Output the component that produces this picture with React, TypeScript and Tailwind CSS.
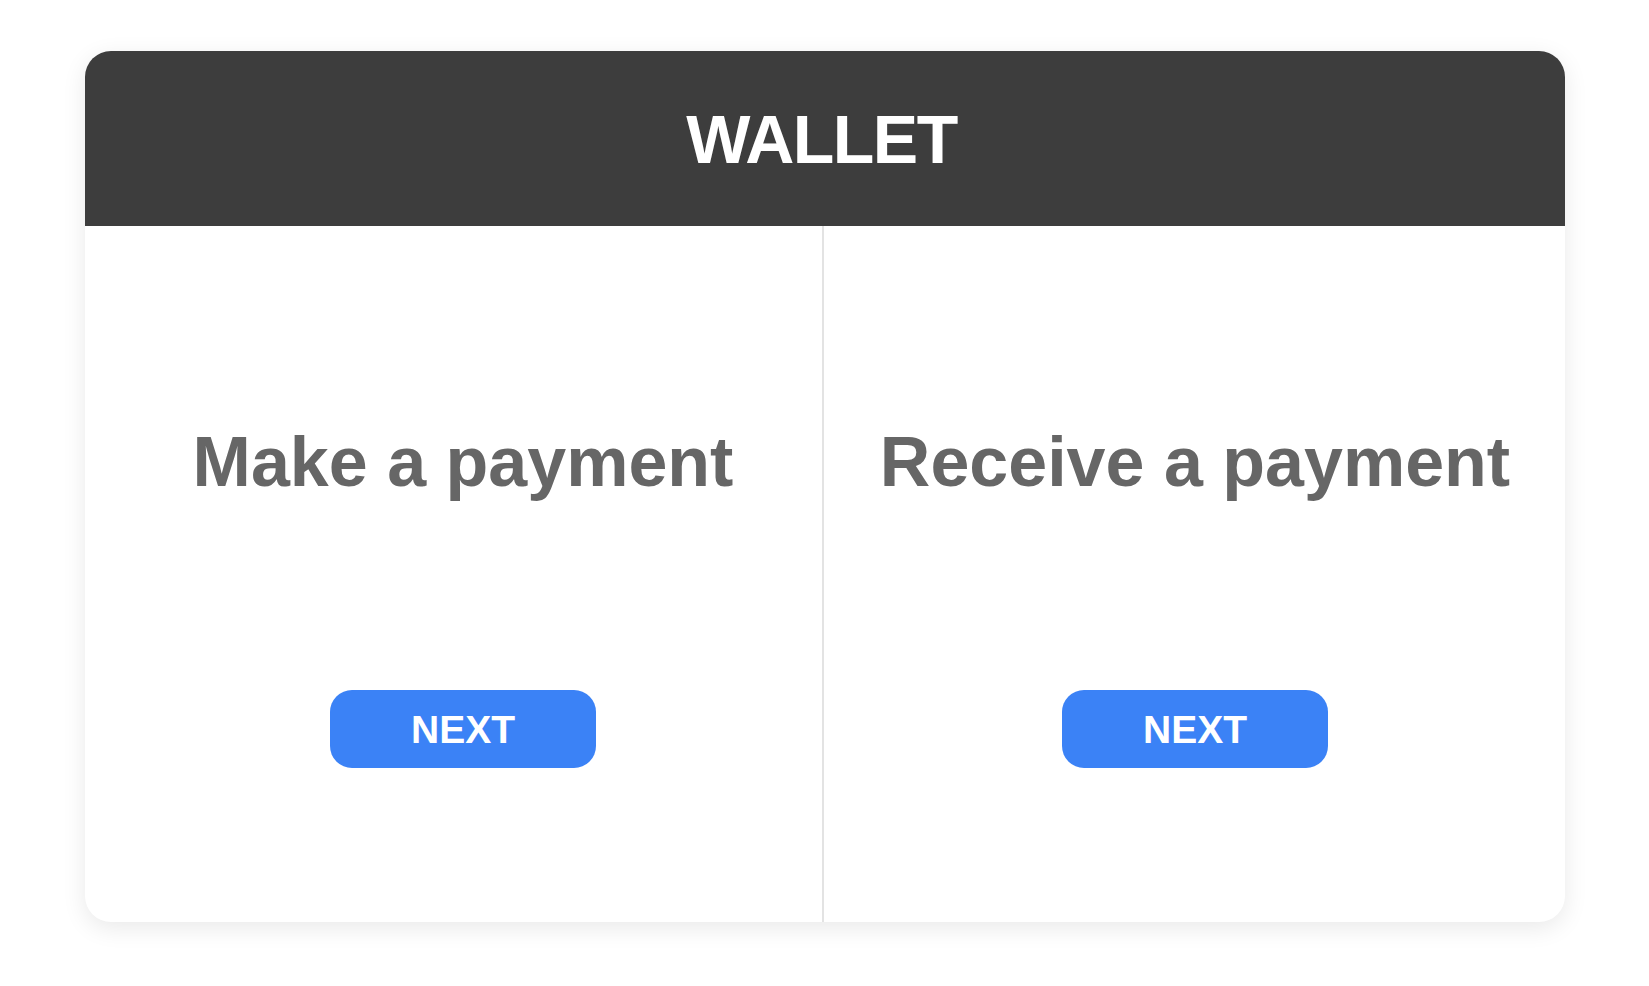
import React from "react";

const font = { fontFamily: '"Liberation Sans", Arial, Helvetica, sans-serif' };

function Panel({ title, pl }: { title: string; pl: string }) {
  return (
    <div className={`flex flex-1 flex-col items-center pt-[201px] ${pl}`}>
      <h2 className="text-[70px] font-bold leading-none text-[#666666] whitespace-nowrap">{title}</h2>
      <button className="mt-[193px] flex h-[78px] w-[266px] items-center justify-center rounded-[22px] bg-[#3b82f6] text-[39px] font-bold leading-none text-white">
        NEXT
      </button>
    </div>
  );
}

export default function App() {
  return (
    <div className="min-h-screen bg-white pt-[51px] pl-[85px]" style={font}>
      <div className="flex h-[871px] w-[1480px] flex-col overflow-hidden rounded-[26px] bg-white shadow-[0_6px_24px_rgba(0,0,0,0.09)]">
        <div className="flex h-[175px] shrink-0 items-center justify-center bg-[#3d3d3d] pr-[7px]">
          <h1 className="text-[68px] font-bold leading-none tracking-[-1.5px] text-white">WALLET</h1>
        </div>
        <div className="flex flex-1">
          <div className="flex w-[737px] shrink-0">
            <Panel title="Make a payment" pl="pl-[19px]" />
          </div>
          <div className="w-[2px] shrink-0 bg-[#e3e3e3]" />
          <div className="flex flex-1">
            <Panel title="Receive a payment" pl="pl-[1px]" />
          </div>
        </div>
      </div>
    </div>
  );
}
